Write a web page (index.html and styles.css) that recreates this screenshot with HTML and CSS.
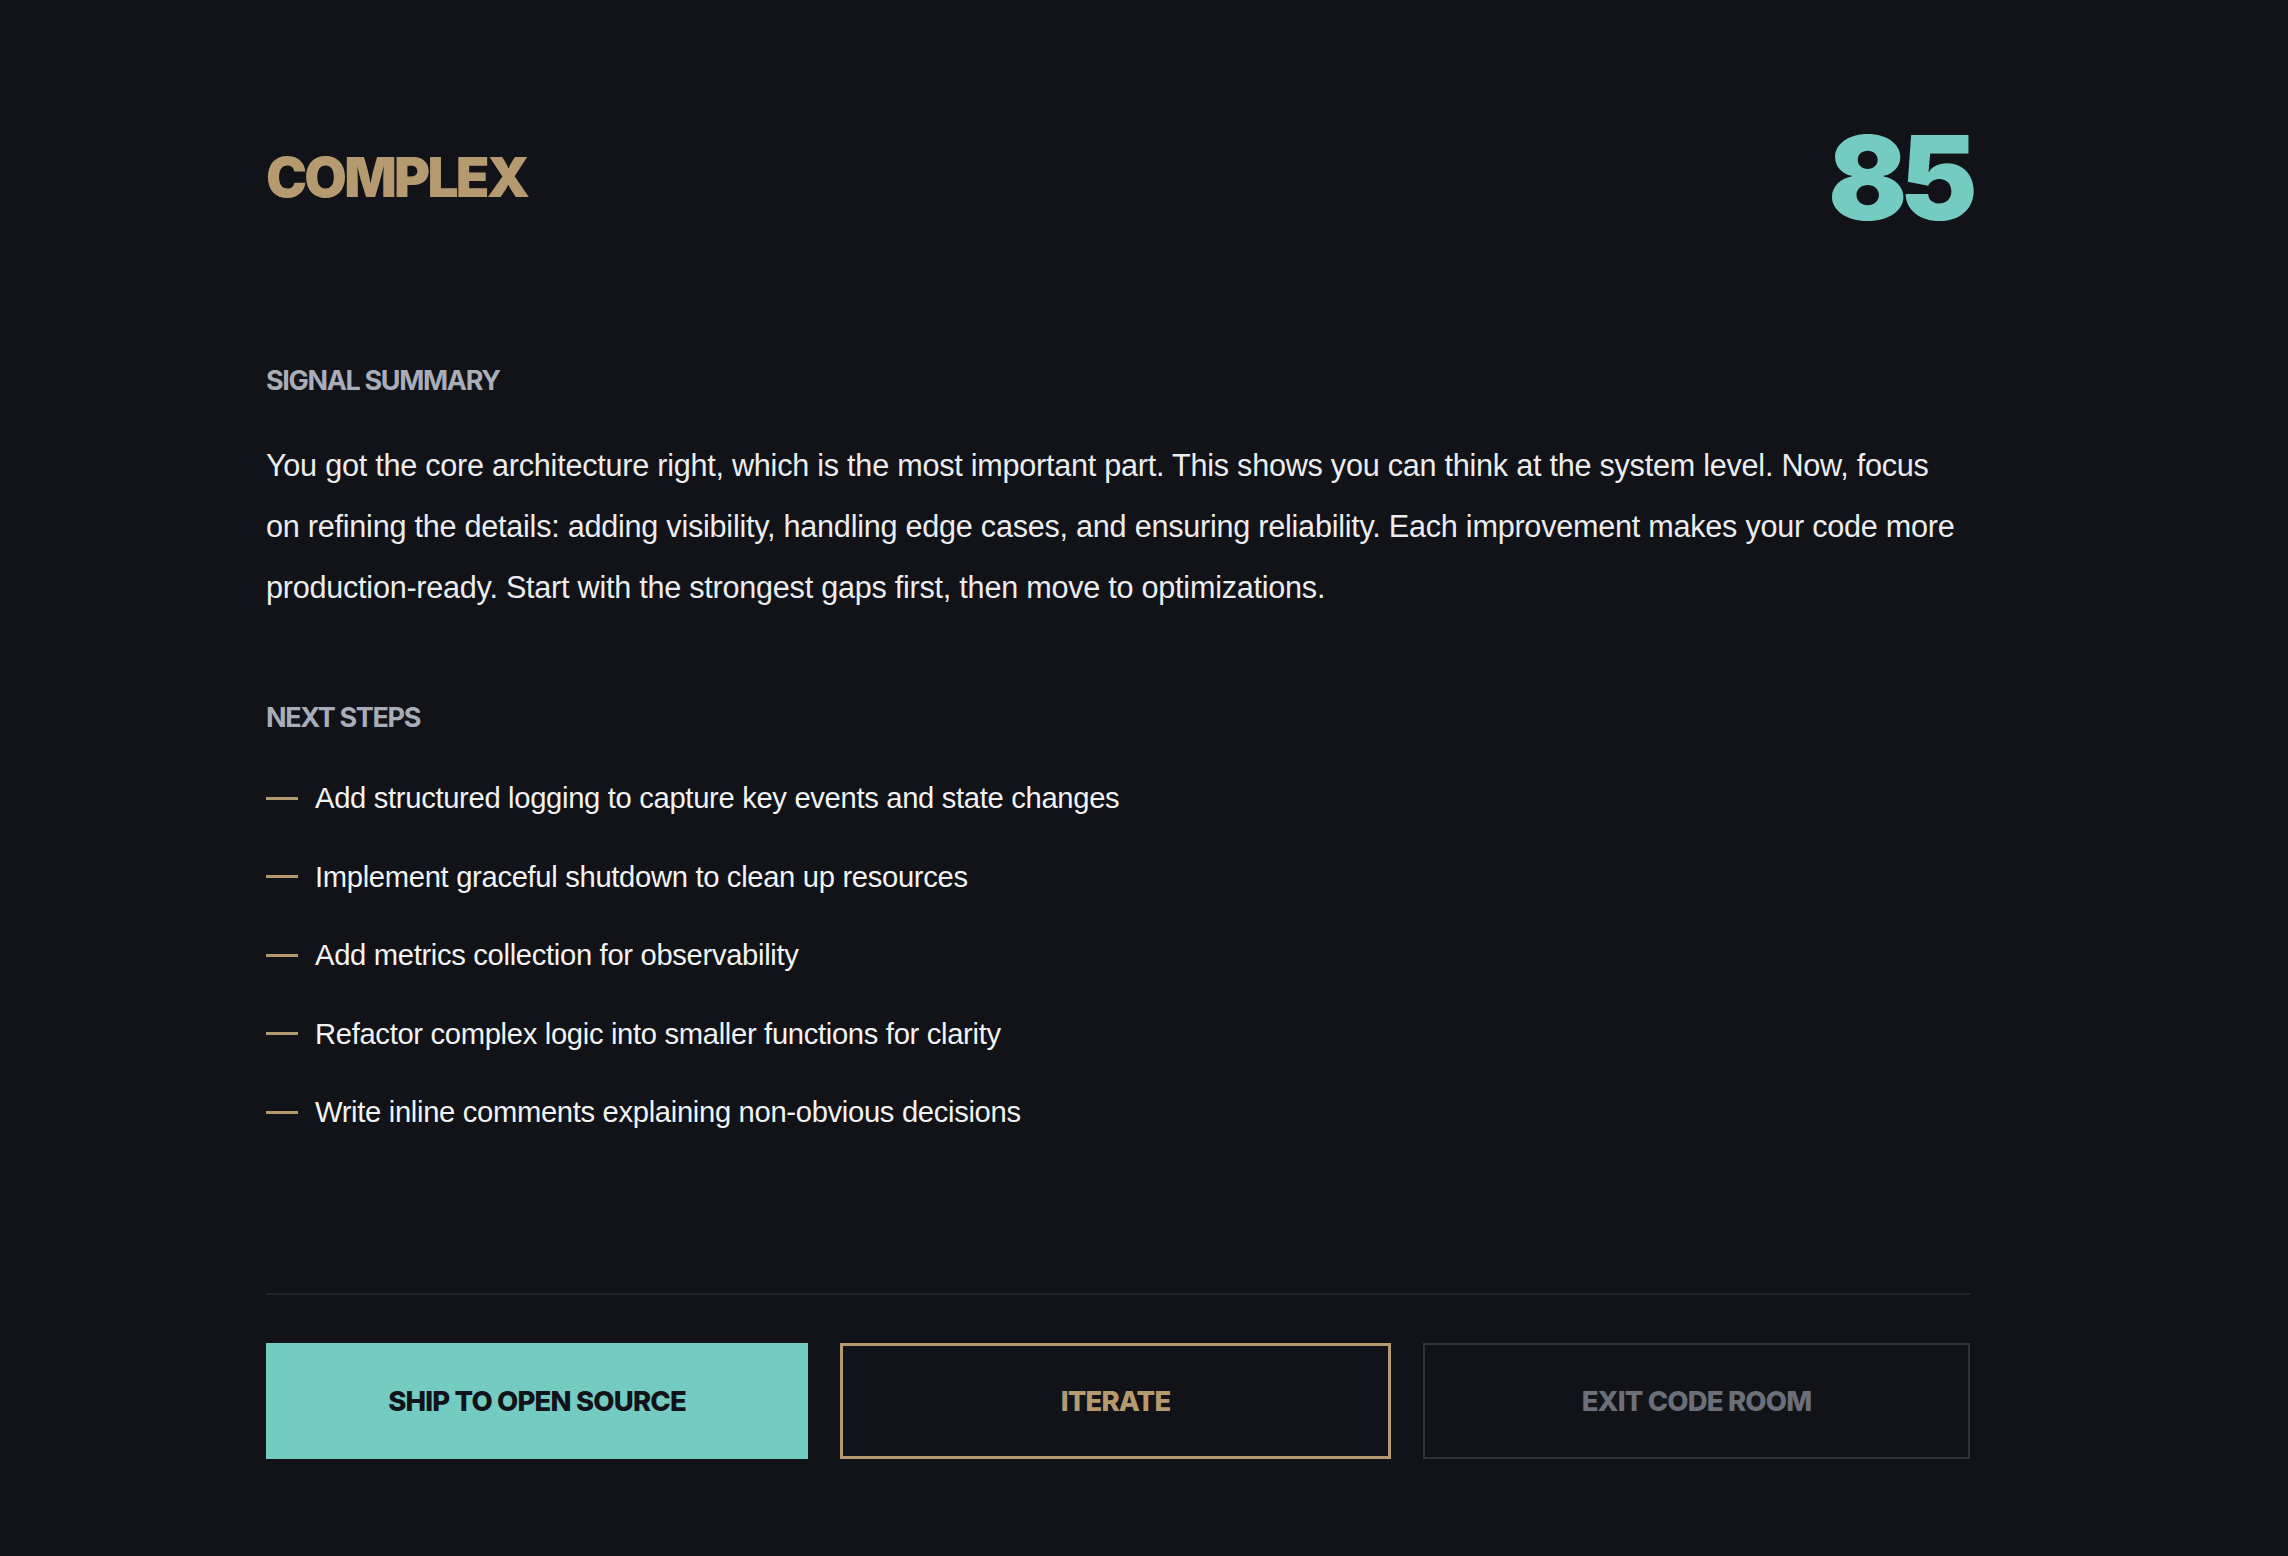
FILE: index.html
```html
<!DOCTYPE html>
<html lang="en">
<head>
<meta charset="utf-8">
<title>Code Room Result</title>
<link rel="stylesheet" href="styles.css">
</head>
<body>
<main class="page">
  <header class="result-head">
    <h1 class="tier">COMPLEX</h1>
    <div class="score">85</div>
  </header>

  <section class="summary">
    <h2 class="label">SIGNAL SUMMARY</h2>
    <p class="summary-text">You got the core architecture right, which is the most important part. This shows you can think at the system level. Now, focus on refining the details: adding visibility, handling edge cases, and ensuring reliability. Each improvement makes your code more production-ready. Start with the strongest gaps first, then move to optimizations.</p>
  </section>

  <section class="steps">
    <h2 class="label">NEXT STEPS</h2>
    <ul class="step-list">
      <li class="step"><span class="dash"></span><span class="step-text">Add structured logging to capture key events and state changes</span></li>
      <li class="step"><span class="dash"></span><span class="step-text">Implement graceful shutdown to clean up resources</span></li>
      <li class="step"><span class="dash"></span><span class="step-text">Add metrics collection for observability</span></li>
      <li class="step"><span class="dash"></span><span class="step-text">Refactor complex logic into smaller functions for clarity</span></li>
      <li class="step"><span class="dash"></span><span class="step-text">Write inline comments explaining non-obvious decisions</span></li>
    </ul>
  </section>

  <footer class="actions">
    <button class="btn btn-primary">SHIP TO OPEN SOURCE</button>
    <button class="btn btn-outline">ITERATE</button>
    <button class="btn btn-ghost">EXIT CODE ROOM</button>
  </footer>
</main>
</body>
</html>
```

FILE: styles.css
```css
* { box-sizing: border-box; }

html, body {
  margin: 0;
  padding: 0;
  background: #111318;
}

body {
  font-family: "Liberation Sans", Arial, sans-serif;
  color: #ececee;
}

.page {
  width: 2288px;
  min-height: 1556px;
  padding: 119px 318px 97px 266px;
}

.result-head {
  display: flex;
  justify-content: space-between;
  align-items: center;
  height: 117px;
}

.tier {
  margin: 0;
  font-family: Inter, "Liberation Sans", sans-serif;
  font-weight: 900;
  font-size: 55px;
  line-height: 1;
  letter-spacing: -0.05em;
  color: #b59a70;
}

.score {
  font-family: Inter, "Liberation Sans", sans-serif;
  font-weight: 900;
  font-size: 117px;
  line-height: 1;
  letter-spacing: -0.065em;
  color: #74cbc1;
}

.label {
  margin: 0;
  font-family: Inter, "Liberation Sans", sans-serif;
  font-weight: 700;
  font-size: 27px;
  line-height: 1;
  letter-spacing: -0.05em;
  color: #a9adb8;
}

.summary {
  margin-top: 131px;
}

.summary-text {
  margin: 41px 0 0;
  font-size: 30.6px;
  line-height: 61px;
  letter-spacing: -0.008em;
  color: #ececee;
}

.steps {
  margin-top: 86px;
}

.step-list {
  list-style: none;
  margin: 45px 0 0;
  padding: 0;
  display: flex;
  flex-direction: column;
  gap: 34.6px;
}

.step {
  display: flex;
  align-items: center;
  height: 44px;
  font-size: 29.2px;
  line-height: 44px;
  letter-spacing: -0.011em;
  color: #f2f2f3;
}

.dash {
  flex: none;
  width: 32px;
  height: 3px;
  background: #b59a70;
  margin-right: 17px;
}

.actions {
  margin-top: 159px;
  border-top: 2px solid #22252b;
  padding-top: 48px;
  display: grid;
  grid-template-columns: 542px 551px 547px;
  justify-content: space-between;
}

.btn {
  height: 116px;
  font-family: Inter, "Liberation Sans", sans-serif;
  font-weight: 800;
  font-size: 27.5px;
  letter-spacing: -0.03em;
  background: transparent;
  cursor: pointer;
  padding: 0;
}

.btn-primary {
  background: #74cbc2;
  border: none;
  color: #111318;
}

.btn-outline {
  border: 3px solid #b59a70;
  color: #b59a70;
}

.btn-ghost {
  border: 2px solid #30333a;
  color: #6b6f79;
}
```
